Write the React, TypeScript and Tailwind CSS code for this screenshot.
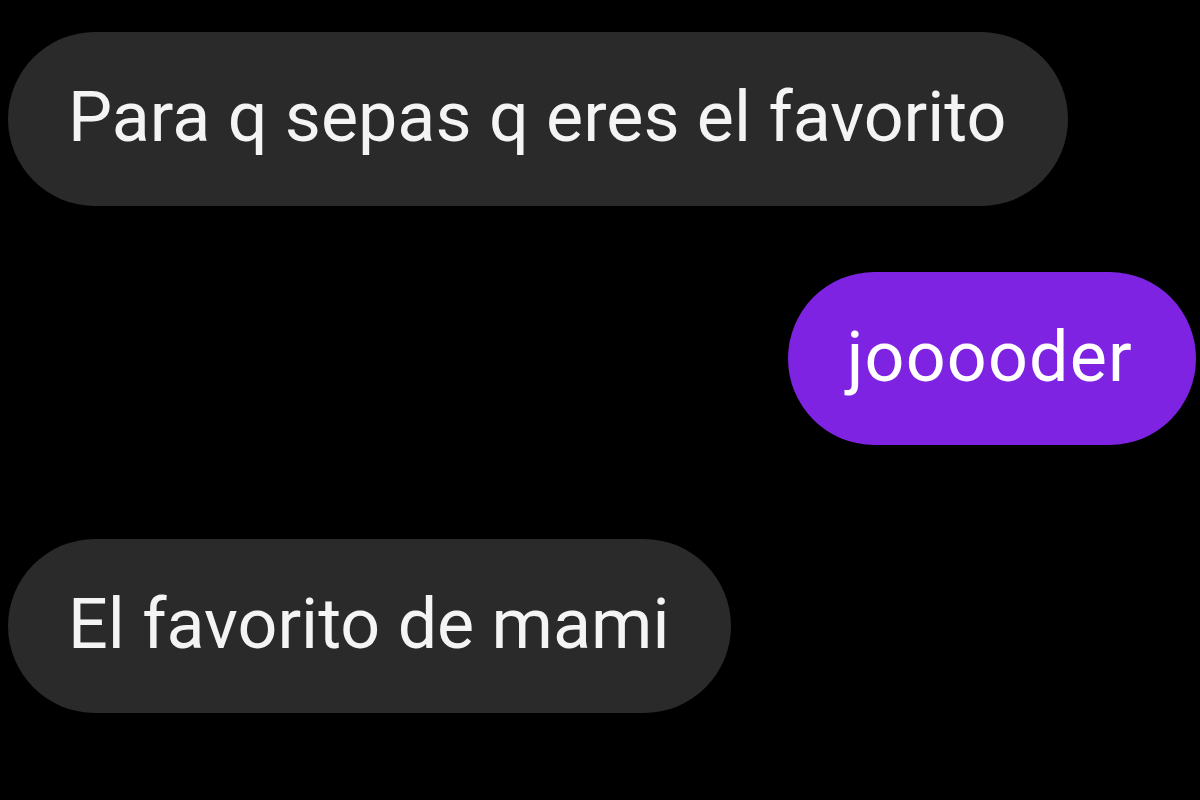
const Bubble = ({ text, mine }: { text: string; mine?: boolean }) => {
  return (
    <div
      className={
        mine
          ? "flex items-center h-[173px] pl-[59px] pr-[63px] rounded-full bg-[#7f23e3] text-white"
          : "flex items-center h-[174px] pl-[60px] pr-[62px] rounded-full bg-[#2a2a2a] text-[#f4f4f4]"
      }
    >
      <span
        className={
          mine
            ? "text-[70px] leading-none pb-[4px] whitespace-nowrap tracking-[1.2px]"
            : "text-[70px] leading-none pb-[4px] whitespace-nowrap"
        }
      >
        {text}
      </span>
    </div>
  );
};

export default function App() {
  return (
    <div className="w-[1200px] h-[800px] bg-black flex flex-col pt-[32px] pl-[8px] pr-[4px] font-['Roboto',sans-serif]">
      <div className="self-start">
        <Bubble text="Para q sepas q eres el favorito" />
      </div>
      <div className="mt-[66px] self-end">
        <Bubble text="jooooder" mine />
      </div>
      <div className="mt-[94px] self-start">
        <Bubble text="El favorito de mami" />
      </div>
    </div>
  );
}
